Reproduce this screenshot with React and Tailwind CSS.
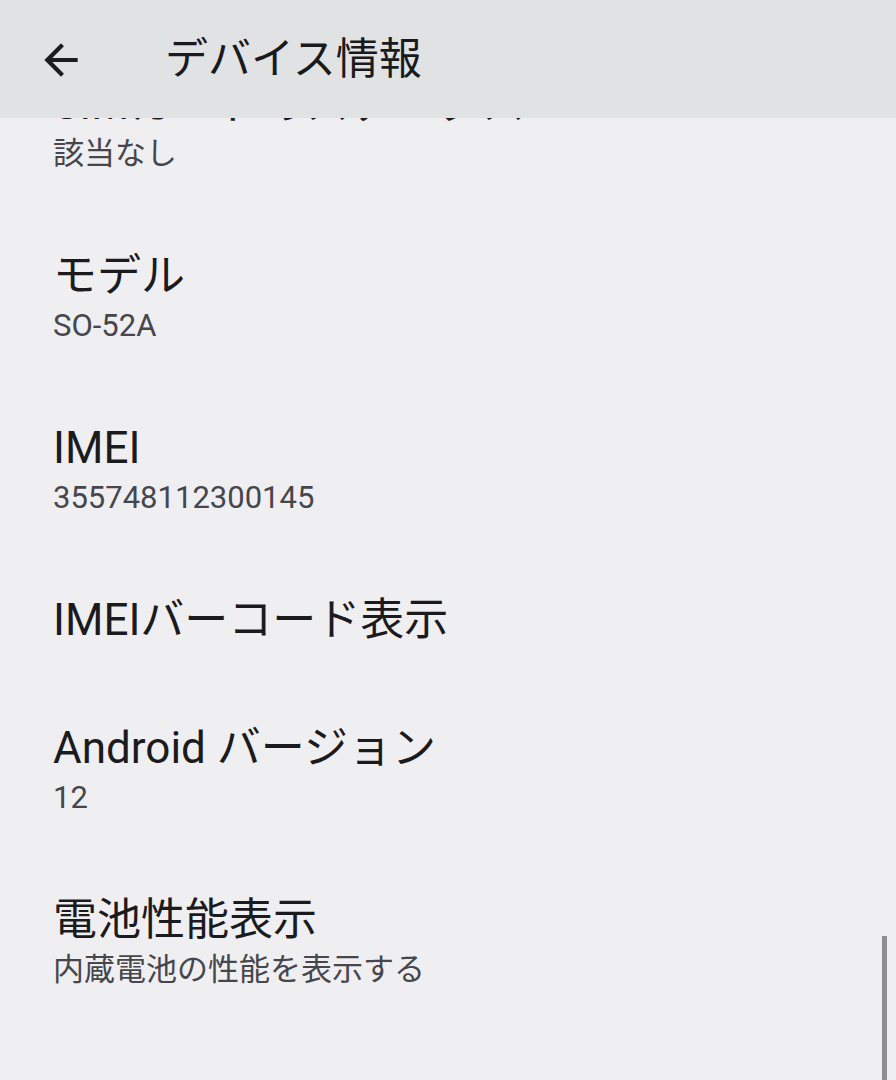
import React from "react";

const items = [
  { title: "SIMカードのステータス", sub: "該当なし" },
  { title: "モデル", sub: "SO-52A" },
  { title: "IMEI", sub: "355748112300145" },
  { title: "IMEIバーコード表示" },
  { title: "Android バージョン", sub: "12" },
  { title: "電池性能表示", sub: "内蔵電池の性能を表示する" },
];

const font = { fontFamily: 'Roboto, "Noto Sans CJK JP", sans-serif' };

export default function App() {
  return (
    <div
      className="relative flex h-[1080px] w-[896px] flex-col overflow-hidden bg-[#efeff2]"
      style={font}
    >
      <header className="relative z-10 flex h-[118px] shrink-0 items-center bg-[#e1e2e4]">
        <div className="ml-[36px] mt-[1px] flex h-[50px] w-[50px] items-center justify-center">
          <svg viewBox="0 0 24 24" className="h-[50px] w-[50px]" fill="#1c1c1e">
            <path d="M20 11H7.83l5.59-5.59L12 4l-8 8 8 8 1.41-1.41L7.83 13H20v-2z" />
          </svg>
        </div>
        <h1 className="ml-[79px] text-[43px] leading-none font-normal text-[#1a1a1c]">
          デバイス情報
        </h1>
      </header>
      <div className="relative flex-1 overflow-hidden">
        <div className="-mt-[78px] flex flex-col">
          {items.map((it) => (
            <div key={it.title} className="flex flex-col px-[53px] py-[36px]">
              <div className="text-[44px] leading-[56px] text-[#1b1b1d] whitespace-nowrap">
                {it.title}
              </div>
              {it.sub && (
                <div className="text-[31px] leading-[44px] text-[#46464c] whitespace-nowrap">
                  {it.sub}
                </div>
              )}
            </div>
          ))}
        </div>
        <div className="absolute right-[9px] top-[818px] h-[200px] w-[5px] bg-[#8e8e92]" />
      </div>
    </div>
  );
}
